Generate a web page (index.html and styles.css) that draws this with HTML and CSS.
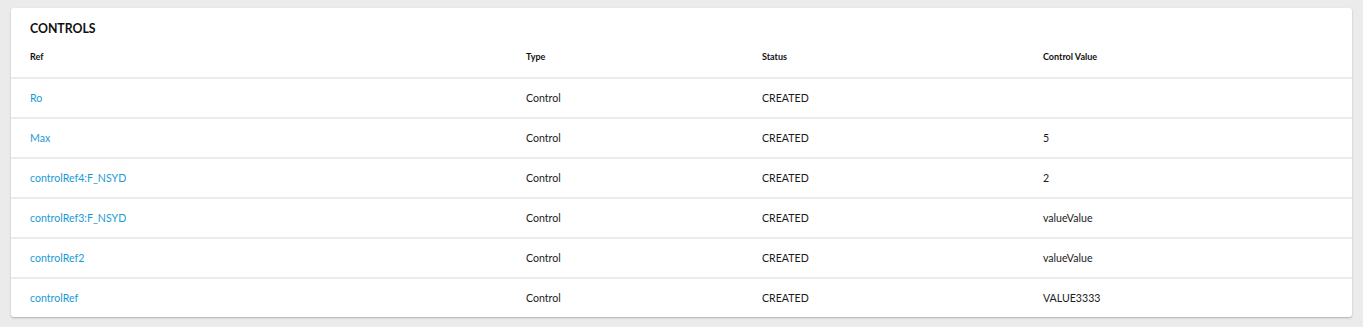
FILE: index.html
```html
<!DOCTYPE html>
<html lang="en">
<head>
    <meta charset="UTF-8">
    <title>Controls</title>
    <link rel="stylesheet" href="styles.css">
</head>
<body>
  <div class="card">
    <h4 class="card_title">CONTROLS</h4>
    <div class="table">
      <div class="row head">
        <div class="cell">Ref</div>
        <div class="cell">Type</div>
        <div class="cell">Status</div>
        <div class="cell">Control Value</div>
      </div>
      <div class="row">
        <div class="cell"><a class="ref" href="#">Ro</a></div>
        <div class="cell">Control</div>
        <div class="cell">CREATED</div>
        <div class="cell"></div>
      </div>
      <div class="row">
        <div class="cell"><a class="ref" href="#">Max</a></div>
        <div class="cell">Control</div>
        <div class="cell">CREATED</div>
        <div class="cell">5</div>
      </div>
      <div class="row">
        <div class="cell"><a class="ref" href="#">controlRef4:F_NSYD</a></div>
        <div class="cell">Control</div>
        <div class="cell">CREATED</div>
        <div class="cell">2</div>
      </div>
      <div class="row">
        <div class="cell"><a class="ref" href="#">controlRef3:F_NSYD</a></div>
        <div class="cell">Control</div>
        <div class="cell">CREATED</div>
        <div class="cell">valueValue</div>
      </div>
      <div class="row">
        <div class="cell"><a class="ref" href="#">controlRef2</a></div>
        <div class="cell">Control</div>
        <div class="cell">CREATED</div>
        <div class="cell">valueValue</div>
      </div>
      <div class="row">
        <div class="cell"><a class="ref" href="#">controlRef</a></div>
        <div class="cell">Control</div>
        <div class="cell">CREATED</div>
        <div class="cell">VALUE3333</div>
      </div>
    </div>
  </div>
</body>
</html>
```

FILE: styles.css
```css
body {
  margin: 0;
  padding: 8px 11px 10px 11px;
  background: #ebebeb;
  font-family: 'Lato', sans-serif;
  color: #1b1b1b;
}

.card {
  background: #fff;
  border-radius: 3px;
  box-shadow: 0 1px 2px rgba(0, 0, 0, 0.25);
  overflow: hidden;
}

.card_title {
  margin: 0;
  padding: 13px 19px 0 19px;
  font-size: 12.3px;
  line-height: 16px;
  font-weight: 700;
  color: #111;
}

.row {
  display: grid;
  grid-template-columns: 496px 236px 281px 1fr;
  height: 40px;
  align-items: center;
  border-top: 2px solid #ececec;
  box-sizing: border-box;
  font-size: 10.6px;
}

.row.head {
  border-top: none;
  height: 40px;
  font-size: 9px;
  font-weight: 700;
  color: #111;
}

.cell {
  padding-left: 19px;
  padding-bottom: 1px;
}

.ref {
  color: #1a9bd5;
  text-decoration: none;
}
```
